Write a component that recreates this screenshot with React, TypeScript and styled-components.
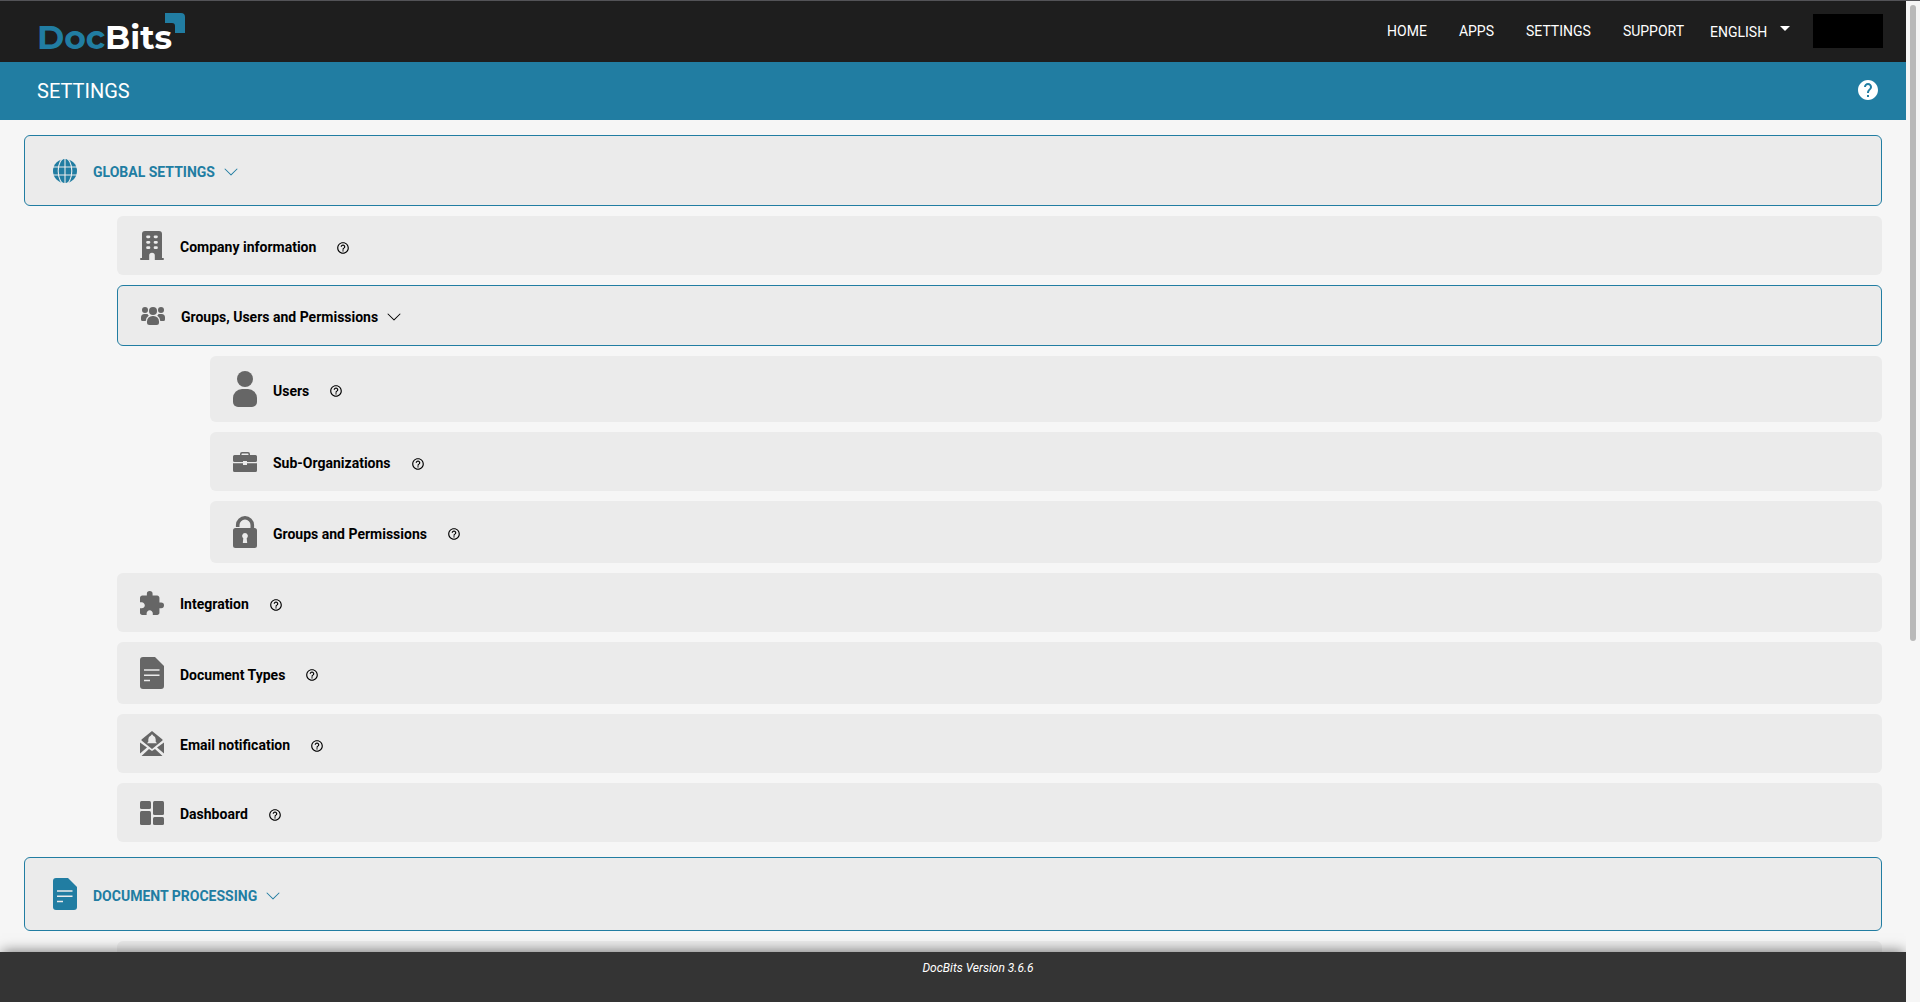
import React from "react";
import styled, { createGlobalStyle, css } from "styled-components";
import { MdExtension, MdHelp, MdHelpOutline } from "react-icons/md";
import { BsChevronDown } from "react-icons/bs";

const color = {
  accent: "#217da2",
  header: "#1e1e1e",
  page: "#f6f6f6",
  row: "#ebebeb",
  icon: "#666666",
  footer: "#343434",
};

const GlobalStyle = createGlobalStyle`
  *, *::before, *::after { box-sizing: border-box; }
  body {
    margin: 0;
    background: ${color.page};
    color: #000;
    font: 14px/20px Roboto, "Liberation Sans", sans-serif;
  }
  button, select { font: inherit; color: inherit; }
`;

const Shell = styled.div`
  display: grid;
  grid-template-columns: minmax(0, 1fr) 14px;
  height: 100vh;
  border-top: 1px solid #535357;
  overflow: hidden;
`;

const Column = styled.div`
  display: flex;
  flex-direction: column;
  min-height: 0;
`;

const Header = styled.header`
  display: flex;
  flex: none;
  align-items: center;
  justify-content: space-between;
  height: 61px;
  padding: 0 23px 2px 38px;
  background: ${color.header};
  color: #fff;
`;

const Logo = styled.a`
  display: block;
  height: 58px;
`;

const Nav = styled.nav`
  display: flex;
  align-items: center;
  gap: 32px;
`;

const NavLink = styled.a`
  color: inherit;
  text-decoration: none;
  text-transform: uppercase;
`;

const Language = styled.label`
  display: flex;
  align-items: center;
  margin-left: -6px;
  gap: 12px;
`;

const LanguageSelect = styled.select`
  appearance: none;
  padding: 2px 0 0;
  border: 0;
  background: transparent;
  outline: none;
`;

const Caret = styled.span`
  border: 5px solid transparent;
  border-top-color: #fff;
  border-bottom: 0;
  margin-bottom: 4px;
`;

const Account = styled.button`
  width: 70px;
  height: 34px;
  margin-left: -9px;
  border: 0;
  background: #000;
`;

const TitleBar = styled.div`
  display: flex;
  flex: none;
  align-items: center;
  justify-content: space-between;
  height: 58px;
  padding: 0 26px 2px 37px;
  background: ${color.accent};
  color: #fff;
`;

const Title = styled.h1`
  margin: 0;
  padding-top: 2px;
  font-size: 20px;
  line-height: 28px;
  font-weight: 400;
  text-transform: uppercase;
`;

const IconButton = styled.button`
  display: flex;
  padding: 0;
  border: 0;
  background: none;
`;

const Content = styled.main`
  display: flex;
  flex: 1;
  flex-direction: column;
  gap: 15px;
  min-height: 0;
  padding: 15px 24px;
  overflow: hidden;
`;

const Section = styled.section`
  display: flex;
  flex: none;
  flex-direction: column;
  gap: 10px;
`;

const Nested = styled.div`
  display: flex;
  flex-direction: column;
  gap: 10px;
  margin-left: 93px;
`;

type Kind = "section" | "group" | "item";

const Row = styled.div<{ $kind: Kind }>`
  display: flex;
  align-items: center;
  padding: 15px 23px;
  border-radius: 6px;
  background: ${color.row};
  font-weight: 700;
  ${(p) =>
    p.$kind !== "item" &&
    css`
      border: 1px solid ${color.accent};
    `}
  ${(p) =>
    p.$kind === "section" &&
    css`
      padding: 20px 28px;
      color: ${color.accent};
      text-transform: uppercase;
    `}
`;

const RowIcon = styled.span<{ $accent?: boolean }>`
  display: flex;
  flex: none;
  align-items: center;
  width: 24px;
  min-height: 29px;
  margin-right: 16px;
  color: ${(p) => (p.$accent ? color.accent : color.icon)};
`;

const RowLabel = styled.button`
  display: flex;
  align-items: center;
  gap: 8px;
  padding: 3px 0 0;
  border: 0;
  background: none;
  font-weight: 700;
  text-transform: inherit;
`;

const RowHelp = styled(IconButton)`
  margin: 4px 0 0 20px;
`;

const Footer = styled.footer`
  position: relative;
  flex: none;
  height: 50px;
  padding: 6px 0 0 50px;
  background: ${color.footer};
  box-shadow: 0 -3px 12px -2px rgba(0, 0, 0, 0.5);
  color: #fff;
  font-size: 12px;
  font-style: italic;
  text-align: center;
`;

const ScrollTrack = styled.div`
  position: relative;
  display: flex;
  flex-direction: column;
  padding: 4px;
  background: ${color.page};
`;

const ScrollThumb = styled.div`
  height: 64%;
  width: 6px;
  border-radius: 3px;
  background: #b9b9b9;
`;

const LogoMark = () => (
  <svg width="150" height="58" viewBox="0 0 150 58" overflow="visible" role="img" aria-label="DocBits">
    <g fontFamily="Montserrat, 'Open Sans', sans-serif" fontSize="33" fontWeight="700">
      <text x="-1" y="47" fill={color.accent}>Doc</text>
      <text x="67" y="47" fill="#fff">Bits</text>
    </g>
    <path d="M127 11h16a4 4 0 0 1 4 4v16h-10v-7a3 3 0 0 0-3-3h-7z" fill={color.accent} />
  </svg>
);

const GlobeIcon = () => (
  <svg width="24" height="24" viewBox="0 0 24 24">
    <circle cx="12" cy="12" r="12" fill="currentColor" />
    <g fill="none" stroke={color.row} strokeWidth="1.1">
      <ellipse cx="12" cy="12" rx="6.8" ry="13" />
      <path d="M12 0v24M0 8h24M0 16h24" />
    </g>
  </svg>
);

const BuildingIcon = () => (
  <svg width="24" height="29" viewBox="0 0 24 29" fill="currentColor">
    <path
      fillRule="evenodd"
      d="M5 0h14a3 3 0 0 1 3 3v24h1a1 1 0 0 1 0 2H14.8v-4.500a2.800 2.800 0 0 0-5.600 0V29H1a1 1 0 0 1 0-2h1V3a3 3 0 0 1 3-3zM7.500 4.500a1.200 1.200 0 0 0 0 2.700h1.500a1.200 1.200 0 0 0 0-2.700zm7.500 0a1.200 1.200 0 0 0 0 2.700h1.500a1.200 1.200 0 0 0 0-2.700zM7.500 10a1.200 1.200 0 0 0 0 2.700h1.500a1.200 1.200 0 0 0 0-2.700zm7.500 0a1.200 1.200 0 0 0 0 2.700h1.500a1.200 1.200 0 0 0 0-2.700zM7.500 15.300a1.200 1.200 0 0 0 0 2.700h1.500a1.200 1.200 0 0 0 0-2.700zm7.500 0a1.200 1.200 0 0 0 0 2.700h1.500a1.200 1.200 0 0 0 0-2.700z"
    />
  </svg>
);

const GroupIcon = () => (
  <svg width="24" height="18" viewBox="0 0 24 18" fill="currentColor">
    <circle cx="12" cy="4" r="4" />
    <circle cx="4" cy="3" r="3" />
    <circle cx="20" cy="3" r="3" />
    <path d="M6 14.500a5.500 5.500 0 0 1 5.500-5.500h1a5.500 5.500 0 0 1 5.500 5.500V15.500a2.500 2.500 0 0 1-2.500 2.500h-7A2.500 2.500 0 0 1 6 15.500zM3.500 7H6.500Q7 8 7.800 8.500Q5 10.500 4.700 14H1.500A1.500 1.500 0 0 1 0 12.500V10.500A3.500 3.500 0 0 1 3.500 7zM20.500 7H17.500Q17 8 16.200 8.500Q19 10.500 19.300 14h3.200a1.500 1.500 0 0 0 1.500-1.500V10.500A3.500 3.500 0 0 0 20.500 7z" />
  </svg>
);

const UserIcon = () => (
  <svg width="24" height="36" viewBox="0 0 24 36" fill="currentColor">
    <circle cx="12" cy="8" r="8" />
    <path d="M0 27a9 9 0 0 1 9-9h6a9 9 0 0 1 9 9v4a5 5 0 0 1-5 5H5a5 5 0 0 1-5-5z" />
  </svg>
);

const BriefcaseIcon = () => (
  <svg width="24" height="20" viewBox="0 0 24 20" fill="currentColor">
    <path
      fillRule="evenodd"
      d="M7 3V2a2 2 0 0 1 2-2h6a2 2 0 0 1 2 2v1h5.500A1.500 1.500 0 0 1 24 4.500V8.500A1.500 1.500 0 0 1 22.500 10H14V9h-4v1H1.500A1.500 1.500 0 0 1 0 8.500V4.500A1.500 1.500 0 0 1 1.500 3zM8.500 3h7V2.200a.7.700 0 0 0-.7-.7H9.200a.7.700 0 0 0-.7.700zM0 11.200h10V13h4v-1.800h10v7.300a1.500 1.500 0 0 1-1.500 1.500h-21A1.500 1.500 0 0 1 0 18.500z"
    />
  </svg>
);

const LockIcon = () => (
  <svg width="24" height="32" viewBox="0 0 24 32" fill="currentColor">
    <path d="M4.700 11V9a7.300 7.200 0 0 1 14.600 0V13" fill="none" stroke="currentColor" strokeWidth="3.600" />
    <path
      fillRule="evenodd"
      d="M2.500 12h19a2.500 2.500 0 0 1 2.500 2.500v15a2.500 2.500 0 0 1-2.500 2.500h-19A2.500 2.500 0 0 1 0 29.500v-15A2.500 2.500 0 0 1 2.500 12zM12 17a2.900 2.900 0 0 0-1.700 5.200L9.800 27h4.400l-.5-4.800A2.900 2.900 0 0 0 12 17z"
    />
  </svg>
);

const PuzzleIcon = () => <MdExtension size={24} viewBox="2 1 21 21" />;

const DocumentIcon = () => (
  <svg width="24" height="32" viewBox="0 0 24 32">
    <path d="M3 0h12l9 9v20a3 3 0 0 1-3 3H3a3 3 0 0 1-3-3V3a3 3 0 0 1 3-3z" fill="currentColor" />
    <path d="M4 13h15.500M4 18.300h15.500M4 23.500h6" stroke={color.row} strokeWidth="1.500" />
  </svg>
);

const MailIcon = () => (
  <svg width="24" height="25" viewBox="0 0 24 25" fill="currentColor">
    <path d="M0 11.500 7 16.500 0 22.500zM24 11.500v11L17 16.500z" />
    <path d="M1.500 25 9 18l3 2 3-2 7.500 7z" />
    <path
      fillRule="evenodd"
      d="M12 0 22.500 8.500V9.500L12 18 1.500 9.500V8.500zM12 3.500a1 1 0 0 0-1 1A4 4 0 0 0 8.300 8.300V10.700L7 12.300h10L15.700 10.700V8.300A4 4 0 0 0 13 4.500a1 1 0 0 0-1-1z"
    />
  </svg>
);

const DashboardIcon = () => (
  <svg width="24" height="24" viewBox="0 0 24 24" fill="currentColor">
    <rect width="11" height="8" rx="1.500" />
    <rect y="10" width="11" height="14" rx="1.500" />
    <rect x="13" width="11" height="14" rx="1.500" />
    <rect x="13" y="16" width="11" height="8" rx="1.500" />
  </svg>
);

interface SettingRowProps {
  kind?: Kind;
  icon: React.ReactNode;
  label: string;
}

const SettingRow = ({ kind = "item", icon, label }: SettingRowProps) => (
  <Row $kind={kind}>
    <RowIcon $accent={kind === "section"}>{icon}</RowIcon>
    <RowLabel type="button">
      {label}
      {kind !== "item" && <BsChevronDown size={16} />}
    </RowLabel>
    {kind === "item" && (
      <RowHelp type="button" aria-label={`Help for ${label}`}>
        <MdHelpOutline size={14} />
      </RowHelp>
    )}
  </Row>
);

export default function App() {
  return (
    <>
      <GlobalStyle />
      <Shell>
        <Column>
          <Header>
            <Logo href="#">
              <LogoMark />
            </Logo>
            <Nav>
              <NavLink href="#">Home</NavLink>
              <NavLink href="#">Apps</NavLink>
              <NavLink href="#">Settings</NavLink>
              <NavLink href="#">Support</NavLink>
              <Language>
                <LanguageSelect aria-label="Language">
                  <option>ENGLISH</option>
                </LanguageSelect>
                <Caret />
              </Language>
              <Account type="button" aria-label="Account" />
            </Nav>
          </Header>
          <TitleBar>
            <Title>Settings</Title>
            <IconButton type="button" aria-label="Help">
              <MdHelp size={24} />
            </IconButton>
          </TitleBar>
          <Content>
            <Section>
              <SettingRow kind="section" icon={<GlobeIcon />} label="Global Settings" />
              <Nested>
                <SettingRow icon={<BuildingIcon />} label="Company information" />
                <SettingRow kind="group" icon={<GroupIcon />} label="Groups, Users and Permissions" />
                <Nested>
                  <SettingRow icon={<UserIcon />} label="Users" />
                  <SettingRow icon={<BriefcaseIcon />} label="Sub-Organizations" />
                  <SettingRow icon={<LockIcon />} label="Groups and Permissions" />
                </Nested>
                <SettingRow icon={<PuzzleIcon />} label="Integration" />
                <SettingRow icon={<DocumentIcon />} label="Document Types" />
                <SettingRow icon={<MailIcon />} label="Email notification" />
                <SettingRow icon={<DashboardIcon />} label="Dashboard" />
              </Nested>
            </Section>
            <Section>
              <SettingRow kind="section" icon={<DocumentIcon />} label="Document Processing" />
              <Nested>
                <Row $kind="item">
                  <RowIcon />
                </Row>
              </Nested>
            </Section>
          </Content>
          <Footer>DocBits Version 3.6.6</Footer>
        </Column>
        <ScrollTrack aria-hidden="true">
          <ScrollThumb />
        </ScrollTrack>
      </Shell>
    </>
  );
}
